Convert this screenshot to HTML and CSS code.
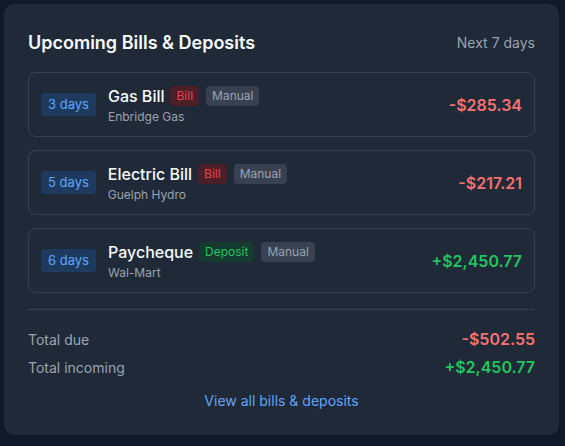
FILE: index.html
```html
<!DOCTYPE html>
<html>

<head>
  <meta charset="utf-8">
  <meta name="viewport" content="width=device-width">
  <title>Upcoming Bills</title>
  <link rel="stylesheet" href="styles.css">
</head>

<body>
  <div class="card">
    <div class="header">
      <h2 class="title">Upcoming Bills &amp; Deposits</h2>
      <span class="range">Next 7 days</span>
    </div>

    <div class="items">
      <div class="item">
        <span class="days">3 days</span>
        <div class="info">
          <div class="name-row">
            <span class="name">Gas Bill</span>
            <span class="tag tag-bill">Bill</span>
            <span class="tag tag-manual">Manual</span>
          </div>
          <div class="payee">Enbridge Gas</div>
        </div>
        <span class="amount neg">-$285.34</span>
      </div>

      <div class="item">
        <span class="days">5 days</span>
        <div class="info">
          <div class="name-row">
            <span class="name">Electric Bill</span>
            <span class="tag tag-bill">Bill</span>
            <span class="tag tag-manual">Manual</span>
          </div>
          <div class="payee">Guelph Hydro</div>
        </div>
        <span class="amount neg">-$217.21</span>
      </div>

      <div class="item">
        <span class="days">6 days</span>
        <div class="info">
          <div class="name-row">
            <span class="name">Paycheque</span>
            <span class="tag tag-deposit">Deposit</span>
            <span class="tag tag-manual">Manual</span>
          </div>
          <div class="payee">Wal-Mart</div>
        </div>
        <span class="amount pos">+$2,450.77</span>
      </div>
    </div>

    <div class="totals">
      <div class="total-row">
        <span class="total-label">Total due</span>
        <span class="total-value neg">-$502.55</span>
      </div>
      <div class="total-row">
        <span class="total-label">Total incoming</span>
        <span class="total-value pos">+$2,450.77</span>
      </div>
    </div>

    <a class="view-all" href="#">View all bills &amp; deposits</a>
  </div>
</body>

</html>
```

FILE: styles.css
```css
body {
  font-family: Inter, "Noto Sans", sans-serif;
  background-color: #111827;
  margin: 0;
  padding: 4px 6px 8px 4px;
}

.card {
  background-color: #1f2937;
  border-radius: 10px;
  padding: 24px;
}

.header {
  display: flex;
  justify-content: space-between;
  align-items: center;
  height: 28px;
  margin-bottom: 16px;
}

.title {
  margin: 0;
  font-size: 18px;
  font-weight: 600;
  color: #f9fafb;
}

.range {
  font-size: 14px;
  color: #9ca3af;
}

.items {
  display: flex;
  flex-direction: column;
  gap: 13px;
}

.item {
  display: flex;
  align-items: center;
  height: 65px;
  box-sizing: border-box;
  border: 1px solid #374151;
  border-radius: 8px;
  padding: 0 12px;
}

.days {
  background-color: #1e3a5f;
  color: #60a5fa;
  font-size: 13px;
  padding: 3px 7px;
  border-radius: 4px;
  line-height: 17px;
  margin-right: 12px;
}

.info {
  flex: 1;
}

.name-row {
  display: flex;
  align-items: center;
  gap: 7px;
  height: 23px;
}

.name {
  font-size: 16px;
  font-weight: 500;
  color: #f9fafb;
  margin-right: -1px;
}

.tag {
  font-size: 12px;
  padding: 2px 6px;
  border-radius: 4px;
  line-height: 16px;
}

.tag-bill {
  background-color: #4a1f28;
  color: #ef4444;
}

.tag-deposit {
  background-color: #153a2e;
  color: #22c55e;
}

.tag-manual {
  background-color: #374151;
  color: #9ca3af;
}

.payee {
  font-size: 12px;
  color: #9ca3af;
  line-height: 16px;
  margin-top: 2px;
}

.amount {
  font-size: 16px;
  font-weight: 600;
}

.neg {
  color: #f87171;
}

.pos {
  color: #22c55e;
}

.totals {
  margin-top: 16px;
  border-top: 1px solid #374151;
  padding-top: 17px;
  display: flex;
  flex-direction: column;
  gap: 4px;
}

.total-row {
  display: flex;
  justify-content: space-between;
  align-items: center;
  height: 24px;
}

.total-label {
  font-size: 14px;
  color: #9ca3af;
}

.total-value {
  font-size: 16px;
  font-weight: 600;
}

.view-all {
  display: block;
  text-align: center;
  margin-top: 12px;
  font-size: 14px;
  line-height: 20px;
  color: #60a5fa;
  text-decoration: none;
}
```
